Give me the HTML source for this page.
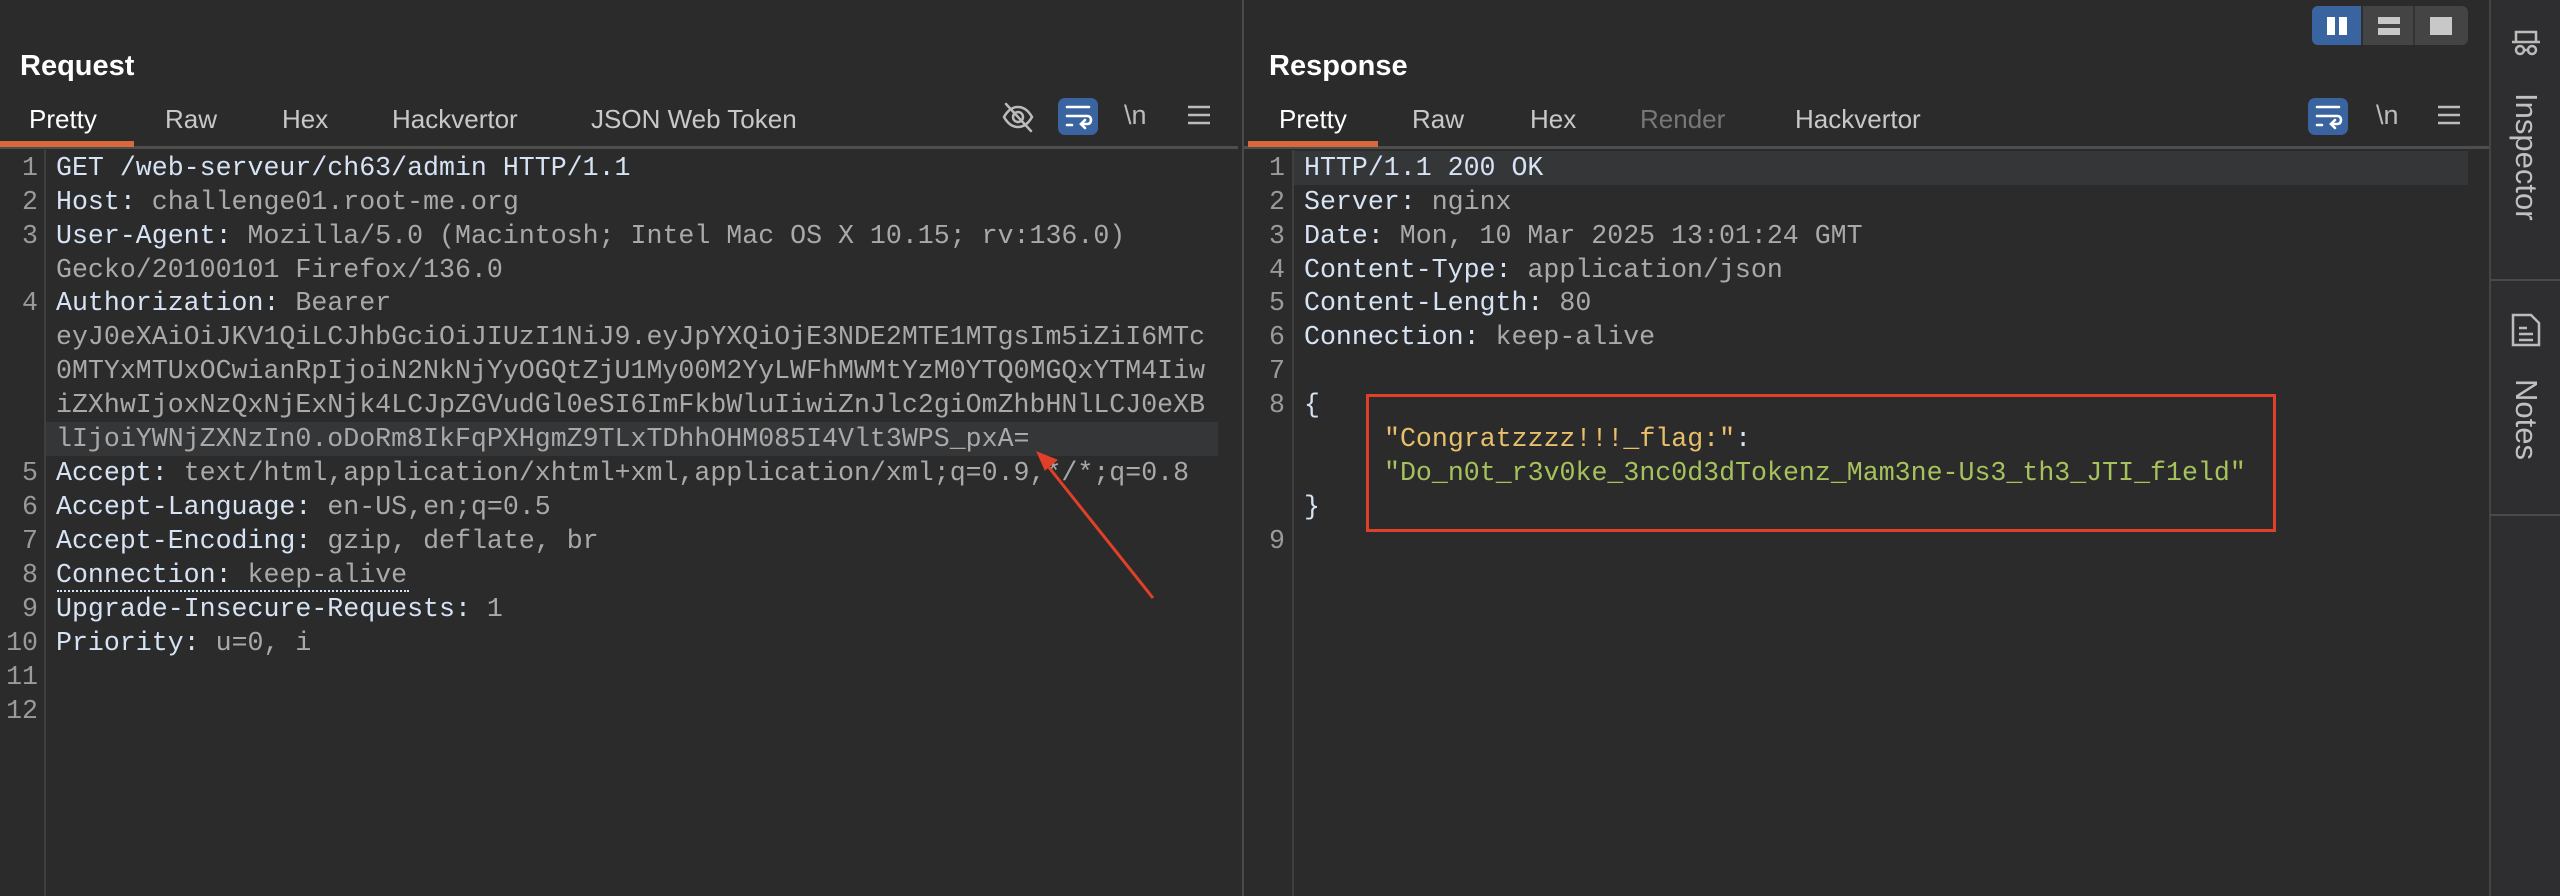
<!DOCTYPE html>
<html><head><meta charset="utf-8">
<style>
*{margin:0;padding:0;box-sizing:border-box}
body{width:2560px;height:896px;background:#2b2b2b;position:relative;overflow:hidden;font-family:"Liberation Sans",sans-serif}
.a{position:absolute}
.mono{font-family:"Liberation Mono",monospace;font-size:26.6px;line-height:34px;white-space:pre;height:34px}
.k{color:#d5e3f5}
.v{color:#a9a9a9}
.ln{color:#9a9a9a;text-align:right}
.tab{font-size:26px;color:#c8c8c8;top:104px;line-height:30px}
.title{font-size:29px;font-weight:bold;color:#fff;top:50px}
</style></head><body>
<!-- panel divider -->
<div class="a" style="left:1242px;top:0;width:2px;height:896px;background:#4a4a4a"></div>
<!-- sidebar -->
<div class="a" style="left:2489px;top:0;width:71px;height:896px;background:#2e2e30;border-left:2px solid #444"></div>
<div class="a" style="left:2490px;top:279px;width:70px;height:2px;background:#4a4a4a"></div>
<div class="a" style="left:2490px;top:514px;width:70px;height:2px;background:#4a4a4a"></div>
<svg class="a" style="left:2508px;top:28px" width="36" height="30" viewBox="0 0 36 30"><g fill="none" stroke="#bbb" stroke-width="2.5"><path d="M4 14h28M8 14V4h20v10"/><circle cx="12" cy="22" r="4"/><circle cx="24" cy="22" r="4"/><path d="M16 22h4"/></g></svg>
<div class="a" style="left:2507px;top:93px;width:40px;height:140px;"><div style="transform:rotate(90deg);transform-origin:0 0;position:absolute;left:37px;top:0;font-size:31px;color:#c0c0c0;white-space:nowrap">Inspector</div></div>
<svg class="a" style="left:2510px;top:312px" width="32" height="36" viewBox="0 0 32 36"><g fill="none" stroke="#bbb" stroke-width="2.5"><path d="M3 3h18l8 8v22H3z"/><path d="M9 16h8M9 22h14M9 28h14"/></g></svg>
<div class="a" style="left:2507px;top:379px;width:40px;height:90px;"><div style="transform:rotate(90deg);transform-origin:0 0;position:absolute;left:37px;top:0;font-size:31px;color:#c0c0c0;white-space:nowrap">Notes</div></div>
<!-- layout buttons -->
<div class="a" style="left:2312px;top:6px;width:156px;height:39px;background:#444;border-radius:6px;overflow:hidden">
<div class="a" style="left:0;top:0;width:49px;height:39px;background:#3a64a0"></div>
<div class="a" style="left:49px;top:0;width:2px;height:39px;background:#2e2e2e"></div>
<div class="a" style="left:101px;top:0;width:2px;height:39px;background:#333"></div>
<div class="a" style="left:15px;top:11px;width:8px;height:18px;background:#fff"></div>
<div class="a" style="left:27px;top:11px;width:8px;height:18px;background:#fff"></div>
<div class="a" style="left:66px;top:11px;width:22px;height:7px;background:#c8c8c8"></div>
<div class="a" style="left:66px;top:22px;width:22px;height:7px;background:#c8c8c8"></div>
<div class="a" style="left:118px;top:11px;width:22px;height:18px;background:#c8c8c8"></div>
</div>

<!-- REQUEST -->
<div class="a title" style="left:20px">Request</div>
<div class="a tab" style="left:29px;color:#fff">Pretty</div>
<div class="a tab" style="left:165px">Raw</div>
<div class="a tab" style="left:282px">Hex</div>
<div class="a tab" style="left:392px">Hackvertor</div>
<div class="a tab" style="left:591px">JSON Web Token</div>
<div class="a" style="left:0;top:146px;width:1238px;height:3px;background:#4e4e4e"></div>
<div class="a" style="left:0;top:141px;width:134px;height:6px;background:#d9693a"></div>
<svg class="a" style="left:1001px;top:100px" width="34" height="34" viewBox="0 0 34 34"><g fill="none" stroke="#bbb" stroke-width="2.5" stroke-linecap="round"><path d="M3 17c4-7 9-10 14-10s10 3 14 10c-4 7-9 10-14 10S7 24 3 17z"/><circle cx="17" cy="17" r="5"/><path d="M5 4l25 27"/></g></svg>
<div class="a" style="left:1058px;top:98px;width:40px;height:37px;background:#3a64a0;border-radius:7px"></div>
<svg class="a" style="left:1058px;top:98px" width="40" height="37" viewBox="0 0 40 37"><g fill="none" stroke="#fff" stroke-width="2.6" stroke-linecap="round"><path d="M9 9h22M9 18h20c3 0 4 2 4 4s-1 4-4 4h-6M9 27h5"/><path d="M27 22l-4 4 4 4"/></g></svg>
<div class="a" style="left:1124px;top:100px;font-size:27px;color:#bbb;font-family:'Liberation Sans',sans-serif">\n</div>
<svg class="a" style="left:1186px;top:104px" width="26" height="22"><g stroke="#bbb" stroke-width="2.5"><path d="M2 3h22M2 11h22M2 19h22"/></g></svg>

<div class="a" style="left:44px;top:150px;width:2px;height:746px;background:#3f3f3f"></div>
<div class="a" style="left:46px;top:422px;width:1172px;height:34px;background:#353638"></div>
<div class="a mono ln" style="left:0;top:151px;width:38px">1</div>
<div class="a mono ln" style="left:0;top:185px;width:38px">2</div>
<div class="a mono ln" style="left:0;top:219px;width:38px">3</div>
<div class="a mono ln" style="left:0;top:286px;width:38px">4</div>
<div class="a mono ln" style="left:0;top:456px;width:38px">5</div>
<div class="a mono ln" style="left:0;top:490px;width:38px">6</div>
<div class="a mono ln" style="left:0;top:524px;width:38px">7</div>
<div class="a mono ln" style="left:0;top:558px;width:38px">8</div>
<div class="a mono ln" style="left:0;top:592px;width:38px">9</div>
<div class="a mono ln" style="left:0;top:626px;width:38px">10</div>
<div class="a mono ln" style="left:0;top:660px;width:38px">11</div>
<div class="a mono ln" style="left:0;top:694px;width:38px">12</div>
<div class="a mono" style="left:56px;top:151px"><span class="k">GET /web-serveur/ch63/admin HTTP/1.1</span></div>
<div class="a mono" style="left:56px;top:185px"><span class="k">Host:</span> <span class="v">challenge01.root-me.org</span></div>
<div class="a mono" style="left:56px;top:219px"><span class="k">User-Agent:</span> <span class="v">Mozilla/5.0 (Macintosh; Intel Mac OS X 10.15; rv:136.0)</span></div>
<div class="a mono v" style="left:56px;top:253px">Gecko/20100101 Firefox/136.0</div>
<div class="a mono" style="left:56px;top:286px"><span class="k">Authorization:</span> <span class="v">Bearer</span></div>
<div class="a mono v" style="left:56px;top:320px">eyJ0eXAiOiJKV1QiLCJhbGciOiJIUzI1NiJ9.eyJpYXQiOjE3NDE2MTE1MTgsIm5iZiI6MTc</div>
<div class="a mono v" style="left:56px;top:354px">0MTYxMTUxOCwianRpIjoiN2NkNjYyOGQtZjU1My00M2YyLWFhMWMtYzM0YTQ0MGQxYTM4Iiw</div>
<div class="a mono v" style="left:56px;top:388px">iZXhwIjoxNzQxNjExNjk4LCJpZGVudGl0eSI6ImFkbWluIiwiZnJlc2giOmZhbHNlLCJ0eXB</div>
<div class="a mono v" style="left:56px;top:422px">lIjoiYWNjZXNzIn0.oDoRm8IkFqPXHgmZ9TLxTDhhOHM085I4Vlt3WPS_pxA=</div>
<div class="a mono" style="left:56px;top:456px"><span class="k">Accept:</span> <span class="v">text/html,application/xhtml+xml,application/xml;q=0.9,*/*;q=0.8</span></div>
<div class="a mono" style="left:56px;top:490px"><span class="k">Accept-Language:</span> <span class="v">en-US,en;q=0.5</span></div>
<div class="a mono" style="left:56px;top:524px"><span class="k">Accept-Encoding:</span> <span class="v">gzip, deflate, br</span></div>
<div class="a mono" style="left:56px;top:558px"><span class="k">Connection:</span> <span class="v">keep-alive</span></div>
<div class="a" style="left:57px;top:590px;width:352px;border-top:2px dotted #d5e3f5"></div>
<div class="a mono" style="left:56px;top:592px"><span class="k">Upgrade-Insecure-Requests:</span> <span class="v">1</span></div>
<div class="a mono" style="left:56px;top:626px"><span class="k">Priority:</span> <span class="v">u=0, i</span></div>
<svg class="a" style="left:0;top:0" width="1240" height="896"><g stroke="#e0402a" stroke-width="3" fill="#e0402a"><path d="M1153 598L1047 465"/><path d="M1037 452l20 8-12 10z" stroke-width="1"/></g></svg>

<!-- RESPONSE -->
<div class="a title" style="left:1269px">Response</div>
<div class="a tab" style="left:1279px;color:#fff">Pretty</div>
<div class="a tab" style="left:1412px">Raw</div>
<div class="a tab" style="left:1530px">Hex</div>
<div class="a tab" style="left:1640px;color:#777">Render</div>
<div class="a tab" style="left:1795px">Hackvertor</div>
<div class="a" style="left:1244px;top:146px;width:1245px;height:3px;background:#4e4e4e"></div>
<div class="a" style="left:1248px;top:141px;width:130px;height:6px;background:#d9693a"></div>
<div class="a" style="left:2308px;top:98px;width:40px;height:37px;background:#3a64a0;border-radius:7px"></div>
<svg class="a" style="left:2308px;top:98px" width="40" height="37" viewBox="0 0 40 37"><g fill="none" stroke="#fff" stroke-width="2.6" stroke-linecap="round"><path d="M9 9h22M9 18h20c3 0 4 2 4 4s-1 4-4 4h-6M9 27h5"/><path d="M27 22l-4 4 4 4"/></g></svg>
<div class="a" style="left:2376px;top:100px;font-size:27px;color:#bbb">\n</div>
<svg class="a" style="left:2436px;top:104px" width="26" height="22"><g stroke="#bbb" stroke-width="2.5"><path d="M2 3h22M2 11h22M2 19h22"/></g></svg>

<div class="a" style="left:1292px;top:150px;width:2px;height:746px;background:#3f3f3f"></div>
<div class="a" style="left:1294px;top:151px;width:1174px;height:34px;background:#353638"></div>
<div class="a mono ln" style="left:1244px;top:151px;width:41px">1</div>
<div class="a mono ln" style="left:1244px;top:185px;width:41px">2</div>
<div class="a mono ln" style="left:1244px;top:219px;width:41px">3</div>
<div class="a mono ln" style="left:1244px;top:253px;width:41px">4</div>
<div class="a mono ln" style="left:1244px;top:286px;width:41px">5</div>
<div class="a mono ln" style="left:1244px;top:320px;width:41px">6</div>
<div class="a mono ln" style="left:1244px;top:354px;width:41px">7</div>
<div class="a mono ln" style="left:1244px;top:388px;width:41px">8</div>
<div class="a mono ln" style="left:1244px;top:524px;width:41px">9</div>
<div class="a mono" style="left:1304px;top:151px"><span class="k">HTTP/1.1 200 OK</span></div>
<div class="a mono" style="left:1304px;top:185px"><span class="k">Server:</span> <span class="v">nginx</span></div>
<div class="a mono" style="left:1304px;top:219px"><span class="k">Date:</span> <span class="v">Mon, 10 Mar 2025 13:01:24 GMT</span></div>
<div class="a mono" style="left:1304px;top:253px"><span class="k">Content-Type:</span> <span class="v">application/json</span></div>
<div class="a mono" style="left:1304px;top:286px"><span class="k">Content-Length:</span> <span class="v">80</span></div>
<div class="a mono" style="left:1304px;top:320px"><span class="k">Connection:</span> <span class="v">keep-alive</span></div>
<div class="a mono k" style="left:1304px;top:388px">{</div>
<div class="a mono" style="left:1384px;top:422px"><span style="color:#e8bf6a">"Congratzzzz!!!_flag:"</span><span class="k">:</span></div>
<div class="a mono" style="left:1384px;top:456px;color:#a5c25c">"Do_n0t_r3v0ke_3nc0d3dTokenz_Mam3ne-Us3_th3_JTI_f1eld"</div>
<div class="a mono k" style="left:1304px;top:490px">}</div>
<div class="a" style="left:1366px;top:394px;width:910px;height:138px;border:3px solid #e0402a"></div>
</body></html>
